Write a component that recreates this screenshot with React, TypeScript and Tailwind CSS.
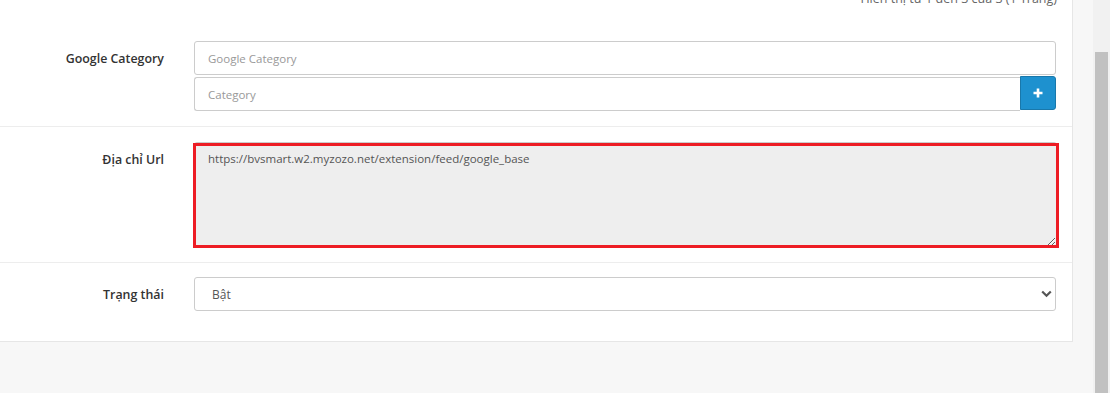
import React from "react";

function Label({ children }: { children: React.ReactNode }) {
  return (
    <div className="w-[179px] shrink-0 pr-[15px] pt-[8px] text-right text-[12.4px] font-semibold leading-[20px] text-[#333]">
      {children}
    </div>
  );
}

export default function App() {
  return (
    <div className="flex h-[393px] w-[1110px] overflow-hidden bg-[#f7f7f7] font-['Open_Sans',sans-serif] text-[12px] text-[#555]">
      <div className="flex-1">
        <div className="w-[1073px] border-r border-b border-[#e6e6e6] bg-white">
          <div className="h-[26px] overflow-hidden">
            <div className="-mt-[10px] pr-[15px] text-right text-[12.5px] leading-[18px] text-[#666]">
              Hiển thị từ 1 đến 3 của 3 (1 Trang)
            </div>
          </div>

          <div className="flex border-b border-[#ededed] pt-[15px] pb-[15px]">
            <Label>Google Category</Label>
            <div className="flex flex-1 flex-col gap-[2px] pl-[15px] pr-[16px]">
              <input
                placeholder="Google Category"
                className="h-[34px] w-full rounded-[3px] border border-[#ccc] px-[13px] pt-[1px] text-[11.5px] text-[#555] placeholder:text-[#999] outline-none"
              />
              <div className="flex h-[34px]">
                <input
                  placeholder="Category"
                  className="h-[34px] flex-1 rounded-l-[3px] border border-r-0 border-[#ccc] px-[13px] pt-[1px] text-[11.5px] text-[#555] placeholder:text-[#999] outline-none"
                />
                <button className="-mt-[1px] flex h-[34px] w-[36px] items-center justify-center rounded-r-[3px] border border-[#1978ab] bg-[#1e91cf]">
                  <svg width="10" height="10" viewBox="0 0 10 10">
                    <path d="M5 0.5V9.5M0.5 5H9.5" stroke="white" strokeWidth="2.6" />
                  </svg>
                </button>
              </div>
            </div>
          </div>

          <div className="flex border-b border-[#ededed] pt-[15px] pb-[15px]">
            <Label>Địa chỉ Url</Label>
            <div className="flex-1 pl-[15px] pr-[15px]">
              <div className="relative">
                <textarea
                  readOnly
                  defaultValue="https://bvsmart.w2.myzozo.net/extension/feed/google_base"
                  className="block h-[105px] w-full rounded-[3px] border border-[#ccc] bg-[#eee] px-[13px] py-[7px] text-[11.5px] leading-[18px] text-[#555] outline-none"
                />
                <div className="pointer-events-none absolute top-[1px] -left-[1px] -right-[2px] -bottom-[1px] border-[3px] border-[#ed1c24]" />
              </div>
            </div>
          </div>

          <div className="flex pt-[14px] pb-[30px]">
            <Label>Trạng thái</Label>
            <div className="flex-1 pl-[15px] pr-[16px]">
              <div className="relative">
                <select className="h-[34px] w-full appearance-none rounded-[3px] border border-[#ccc] bg-white pl-[17px] pt-[1px] text-[12px] text-[#555] outline-none">
                  <option>Bật</option>
                  <option>Tắt</option>
                </select>
                <svg
                  className="pointer-events-none absolute right-[4px] top-[13px]"
                  width="11"
                  height="8"
                  viewBox="0 0 11 8"
                >
                  <path d="M1.2 1.5L5.5 5.8L9.8 1.5" stroke="#555" strokeWidth="2.2" fill="none" />
                </svg>
              </div>
            </div>
          </div>
        </div>
      </div>
      <div className="w-[17px] shrink-0 bg-[#f1f1f1] pt-[52px] pl-[2px] pr-[2px]">
        <div className="h-full w-full bg-[#c1c1c1]" />
      </div>
    </div>
  );
}
